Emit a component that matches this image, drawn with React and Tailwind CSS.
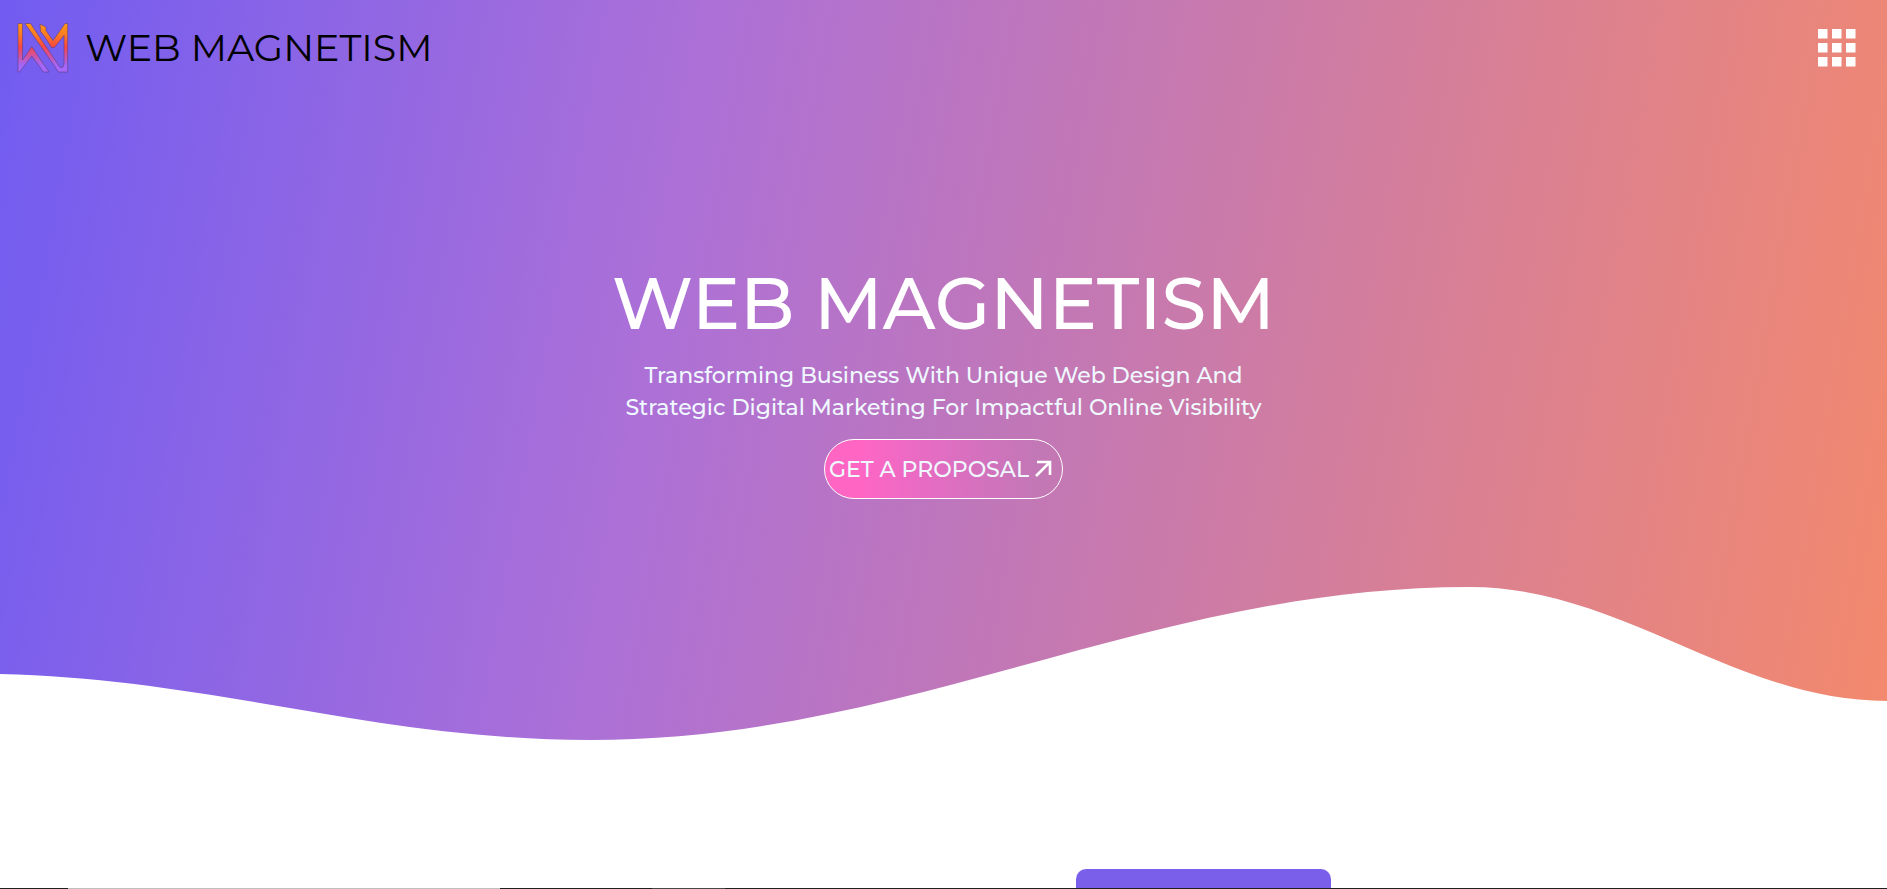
function Logo() {
  return (
    <svg viewBox="0 0 52 52" className="size-13 shrink-0" aria-hidden="true">
      <defs>
        <linearGradient id="logoFill" x1="0" y1="1" x2="0" y2="50" gradientUnits="userSpaceOnUse">
          <stop offset="0" stopColor="#ff9a14" />
          <stop offset="0.25" stopColor="#fb7a22" />
          <stop offset="0.48" stopColor="#fa4844" />
          <stop offset="0.66" stopColor="#d3519c" />
          <stop offset="0.85" stopColor="#a565f5" />
          <stop offset="1" stopColor="#a868ff" />
        </linearGradient>
      </defs>
      <g fill="url(#logoFill)" stroke="#5a3a78" strokeOpacity="0.7" strokeWidth="0.8" strokeLinejoin="round">
        <path d="M1 1.500H5.500V38L14.800 24.800L32 50H26.500L14.800 34L2.500 50H1Z" />
        <path d="M8 1.500H13.500L43 45.300H45.700L47 42.300V13.500L37.500 25.500H34.500L26.500 13L23.500 9.500L23 2L29 5V8.500L36 18.500L48 1.500H50.700V50H41.500Z" />
      </g>
    </svg>
  );
}

const cells = [0, 14, 28];

function MenuIcon() {
  return (
    <svg viewBox="0 0 38 38" className="size-[38px]" fill="#fff" aria-hidden="true">
      {cells.map((y) => cells.map((x) => <rect key={`${x}-${y}`} x={x} y={y} width="9.500" height="9.500" />))}
    </svg>
  );
}

export default function App() {
  return (
    <div className="flex min-h-screen flex-col bg-white font-['Montserrat','Inter',sans-serif]">
      <div className="flex flex-col bg-[linear-gradient(100deg,#715cf1_0%,#ac70d7_35%,#f68a68_102%)]">
        <header className="flex h-24 items-center justify-between pr-[31px] pl-[17px]">
          <a href="#home" className="flex items-center gap-4 text-[38px] leading-none text-black">
            <Logo />
            WEB MAGNETISM
          </a>
          <button type="button" aria-label="Open menu" className="cursor-pointer">
            <MenuIcon />
          </button>
        </header>

        <main className="flex flex-col items-center px-4 pt-[159px] pb-22 text-center">
          <h1 className="text-[72px] leading-24 font-medium text-white">WEB MAGNETISM</h1>
          <p className="mt-[9px] text-[22px] leading-8 font-medium text-[#f0f8ff]">
            Transforming Business With Unique Web Design And
            <br />
            Strategic Digital Marketing For Impactful Online Visibility
          </p>
          <a
            href="#proposal"
            className="mt-[15px] flex h-15 items-center gap-[3px] rounded-full border border-white bg-linear-to-r from-[#ff66c4] from-15% to-transparent to-90% pr-[6px] pl-1 text-[22px] font-medium text-[#f0f8ff]"
          >
            GET A PROPOSAL
            <svg viewBox="0 0 24 24" className="size-6" fill="none" stroke="#fff" strokeWidth="2.600" aria-hidden="true">
              <path d="M4 19L17.500 5.500M5 5H18V18" />
            </svg>
          </a>
        </main>

        <svg viewBox="0 587 1887 213" preserveAspectRatio="none" className="-mb-px block h-[213px] w-full" aria-hidden="true">
          <path
            fill="#fff"
            d="M0 674C215 679 375 740 590 740C911 740 1149 587 1470 587C1622 587 1735 701 1887 701V801H0Z"
          />
        </svg>
      </div>

      <section className="flex flex-1 flex-col justify-end pt-16">
        <div className="grid grid-cols-[57%_1fr]">
          <div className="col-start-2 h-[19px] w-[255px] rounded-t-[10px] bg-[#7a5fea]" />
        </div>
      </section>
      <footer className="flex h-px bg-[#202020]">
        <div className="ml-[68px] w-[432px] bg-[#c0c0c0]" />
        <div className="ml-38 w-[73px] bg-[#484848]" />
      </footer>
    </div>
  );
}
